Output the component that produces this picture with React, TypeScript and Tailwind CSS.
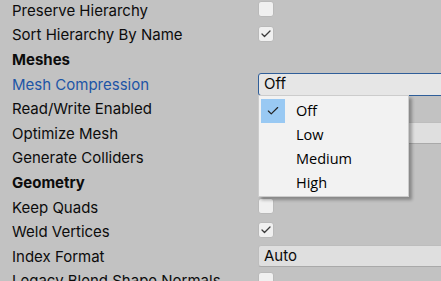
import { Check } from "lucide-react";

type Row =
  | { kind: "header"; label: string }
  | { kind: "check"; label: string; checked: boolean }
  | { kind: "select"; label: string; value: string; focused?: boolean };

const rows: Row[] = [
  { kind: "check", label: "Preserve Hierarchy", checked: false },
  { kind: "check", label: "Sort Hierarchy By Name", checked: true },
  { kind: "header", label: "Meshes" },
  { kind: "select", label: "Mesh Compression", value: "Off", focused: true },
  { kind: "check", label: "Read/Write Enabled", checked: false },
  { kind: "select", label: "Optimize Mesh", value: "" },
  { kind: "check", label: "Generate Colliders", checked: false },
  { kind: "header", label: "Geometry" },
  { kind: "check", label: "Keep Quads", checked: false },
  { kind: "check", label: "Weld Vertices", checked: true },
  { kind: "select", label: "Index Format", value: "Auto" },
  { kind: "check", label: "Legacy Blend Shape Normals", checked: false },
];

const options = ["Off", "Low", "Medium", "High"];

function Checkbox({ checked }: { checked: boolean }) {
  return (
    <div className="-mt-[4px] flex h-[16px] w-[16px] items-center justify-center rounded-[3px] border border-[#b9b9b9] bg-[#f0f0f0]">
      {checked && <Check size={12} strokeWidth={2.6} className="text-[#3a3a3a]" />}
    </div>
  );
}

function Select({ value, focused }: { value: string; focused?: boolean }) {
  return (
    <div
      className={
        focused
          ? "-mt-[1px] flex h-[23px] w-[220px] shrink-0 items-center rounded-[3px] border border-[#2f5e99] bg-[#e6e6e6] pl-[5px] text-[#0a0a0a]"
          : "-mt-[1px] flex h-[22px] w-[220px] shrink-0 items-center rounded-[3px] border border-[#bdbdbd] border-b-[#a9a9a9] bg-[#dfdfdf] pl-[5px] text-[#0a0a0a]"
      }
    >
      {value}
    </div>
  );
}

export default function App() {
  return (
    <div
      className="relative h-[281px] w-[441px] overflow-hidden bg-[#c2c2c2] text-[15px] text-[#0c0c0c]"
      style={{ fontFamily: "Inter, 'Noto Sans', sans-serif" }}
    >
      <div className="-mt-[1.3px] flex flex-col">
        {rows.map((r) => (
          <div key={r.label} className="flex h-[24.6px] items-center whitespace-nowrap">
            <div
              className={
                "w-[258px] shrink-0 pl-[12px] " +
                (r.kind === "header" ? "font-bold" : "") +
                (r.kind === "select" && r.focused ? " text-[#1d55a6]" : "")
              }
            >
              {r.label}
            </div>
            {r.kind === "check" && <Checkbox checked={r.checked} />}
            {r.kind === "select" && <Select value={r.value} focused={r.focused} />}
          </div>
        ))}
      </div>

      {/* popup menu for Mesh Compression */}
      <div
        className="absolute left-[258px] top-[95px] w-[151px] border border-[#cccccc] bg-[#f2f2f2] pb-[1px] pl-[2px] pt-[3px] shadow-[3px_3px_3px_rgba(0,0,0,0.3)]"
        style={{ fontFamily: "'Open Sans', 'Noto Sans', sans-serif" }}
      >
        {options.map((o, i) => (
          <div key={o} className="flex h-[24px] items-center text-[14.5px] text-[#000]">
            <div className="flex h-[24px] w-[24px] items-center justify-center">
              {i === 0 && (
                <div className="flex h-[24px] w-[24px] items-center justify-center bg-[#99c9f3]">
                  <Check size={14} strokeWidth={2} className="text-[#222]" />
                </div>
              )}
            </div>
            <div className="pl-[11px]">{o}</div>
          </div>
        ))}
      </div>
    </div>
  );
}
